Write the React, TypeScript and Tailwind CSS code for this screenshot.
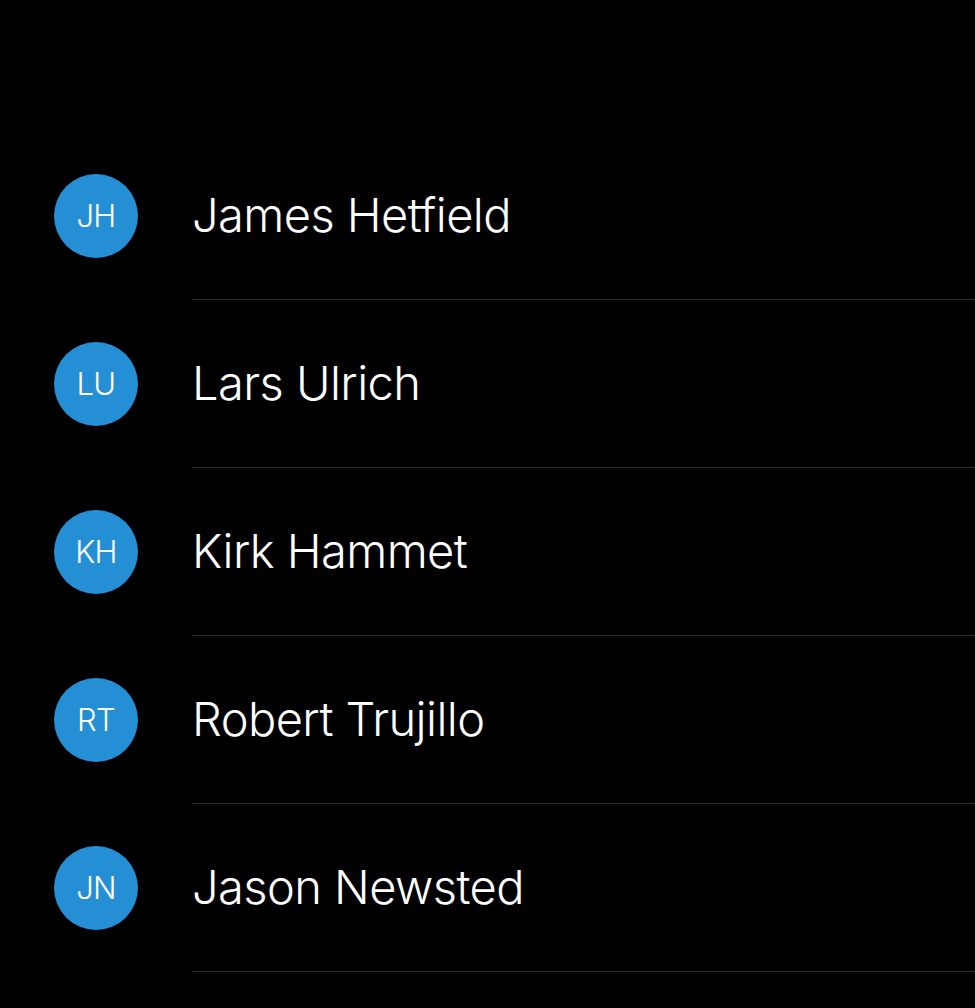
const MEMBERS = [
    { initials: 'JH', name: 'James Hetfield' },
    { initials: 'LU', name: 'Lars Ulrich' },
    { initials: 'KH', name: 'Kirk Hammet' },
    { initials: 'RT', name: 'Robert Trujillo' },
    { initials: 'JN', name: 'Jason Newsted' },
];

export default function App() {
    return (
        <div
            className="min-h-screen bg-black pt-[132px] text-white"
            style={{ fontFamily: 'Inter, "Noto Sans", sans-serif' }}
        >
            <ul>
                {MEMBERS.map((m) => (
                    <li key={m.initials} className="flex h-[168px] items-center">
                        {/* Avatar */}
                        <div className="ml-[54px] flex h-[84px] w-[84px] shrink-0 items-center justify-center rounded-full bg-[#258fd6] text-[31px] font-light tracking-tight">
                            {m.initials}
                        </div>

                        {/* Name + divider */}
                        <div className="ml-[54px] flex h-full flex-1 items-center border-b border-[#2f2f31]">
                            <span className="text-[47px] font-light tracking-[-0.012em]">{m.name}</span>
                        </div>
                    </li>
                ))}
            </ul>
        </div>
    );
}
